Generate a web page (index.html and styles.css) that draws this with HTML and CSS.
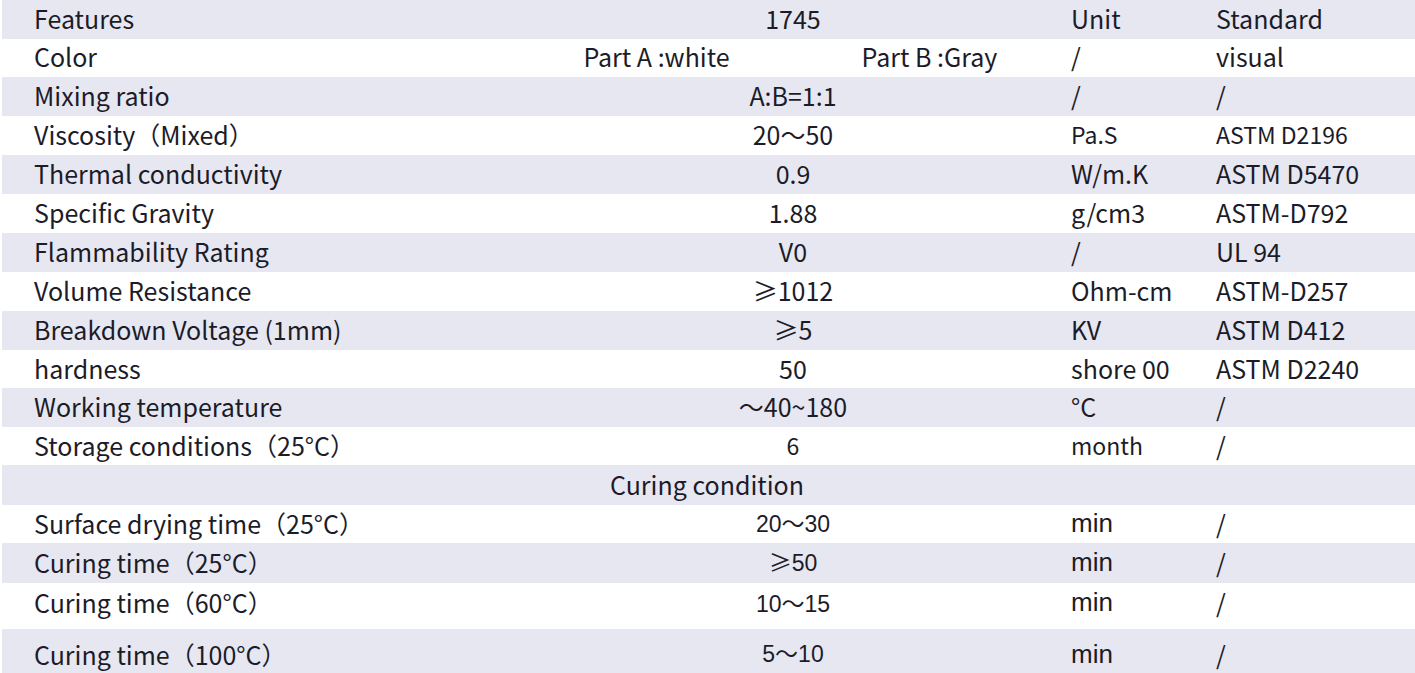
FILE: index.html
```html
<!DOCTYPE html>
<html lang="en">
<head>
<meta charset="utf-8">
<title>1745 Specification</title>
<link rel="stylesheet" href="styles.css">
</head>
<body>
<div class="sheet">
  <div class="row shade h39">
    <div class="label">Features</div>
    <div class="val">1745</div>
    <div class="unit">Unit</div>
    <div class="std">Standard</div>
  </div>
  <div class="row h38">
    <div class="label up">Color</div>
    <div class="val split up"><span>Part A :white</span><span>Part B :Gray</span></div>
    <div class="unit up">/</div>
    <div class="std up">visual</div>
  </div>
  <div class="row shade h39">
    <div class="label">Mixing ratio</div>
    <div class="val">A:B=1:1</div>
    <div class="unit">/</div>
    <div class="std">/</div>
  </div>
  <div class="row h39">
    <div class="label">Viscosity（Mixed）</div>
    <div class="val">20～50</div>
    <div class="unit small">Pa.S</div>
    <div class="std small">ASTM D2196</div>
  </div>
  <div class="row shade h39">
    <div class="label">Thermal conductivity</div>
    <div class="val">0.9</div>
    <div class="unit">W/m.K</div>
    <div class="std">ASTM D5470</div>
  </div>
  <div class="row h39">
    <div class="label">Specific Gravity</div>
    <div class="val">1.88</div>
    <div class="unit">g/cm3</div>
    <div class="std">ASTM-D792</div>
  </div>
  <div class="row shade h39">
    <div class="label">Flammability Rating</div>
    <div class="val">V0</div>
    <div class="unit">/</div>
    <div class="std">UL 94</div>
  </div>
  <div class="row h39">
    <div class="label">Volume Resistance</div>
    <div class="val">≥1012</div>
    <div class="unit">Ohm-cm</div>
    <div class="std">ASTM-D257</div>
  </div>
  <div class="row shade h39">
    <div class="label">Breakdown Voltage (1mm)</div>
    <div class="val">≥5</div>
    <div class="unit">KV</div>
    <div class="std">ASTM D412</div>
  </div>
  <div class="row h38">
    <div class="label">hardness</div>
    <div class="val">50</div>
    <div class="unit">shore 00</div>
    <div class="std">ASTM D2240</div>
  </div>
  <div class="row shade h39">
    <div class="label">Working temperature</div>
    <div class="val">～40~180</div>
    <div class="unit">°C</div>
    <div class="std">/</div>
  </div>
  <div class="row h38">
    <div class="label">Storage conditions（25°C）</div>
    <div class="val small">6</div>
    <div class="unit small">month</div>
    <div class="std">/</div>
  </div>
  <div class="row shade h40">
    <div class="label"></div>
    <div class="val section">Curing condition</div>
    <div class="unit"></div>
    <div class="std"></div>
  </div>
  <div class="row h38">
    <div class="label">Surface drying time（25°C）</div>
    <div class="val arial">20<span class="cjk">～</span>30</div>
    <div class="unit arial-unit">min</div>
    <div class="std">/</div>
  </div>
  <div class="row shade h40">
    <div class="label">Curing time（25°C）</div>
    <div class="val arial"><span class="cjk">≥</span>50</div>
    <div class="unit arial-unit">min</div>
    <div class="std">/</div>
  </div>
  <div class="row h46 top">
    <div class="label">Curing time（60°C）</div>
    <div class="val arial">10<span class="cjk">～</span>15</div>
    <div class="unit arial-unit">min</div>
    <div class="std">/</div>
  </div>
  <div class="row shade h44 low">
    <div class="label">Curing time（100°C）</div>
    <div class="val arial">5<span class="cjk">～</span>10</div>
    <div class="unit arial-unit">min</div>
    <div class="std">/</div>
  </div>
</div>
</body>
</html>
```

FILE: styles.css
```css
html, body {
  margin: 0;
  padding: 0;
  background: #ffffff;
}

body {
  font-family: "Noto Sans CJK SC", "Noto Sans", sans-serif;
  font-size: 25px;
  color: #1c1c28;
  width: 1415px;
  height: 673px;
  overflow: hidden;
}

.sheet {
  display: flex;
  flex-direction: column;
  padding-left: 2px;
}

.row {
  box-sizing: border-box;
  display: grid;
  grid-template-columns: 518px 546px 145px 1fr;
  align-items: center;
  line-height: 30px;
  padding-bottom: 3px;
}

.row.shade {
  background: #e7e7f2;
}

.h38 { height: 38px; }
.h39 { height: 39px; }
.h40 { height: 40px; }
.h44 { height: 44px; }
.h46 { height: 46px; }

.row.top { align-items: start; padding-top: 4px; padding-bottom: 0; }
.row.low { align-items: end; padding-bottom: 4px; }

.label {
  padding-left: 32px;
  white-space: nowrap;
}

.val {
  text-align: center;
  white-space: nowrap;
}

.unit, .std {
  padding-left: 5px;
  white-space: nowrap;
}

.up { position: relative; top: -1px; }

.split {
  display: grid;
  grid-template-columns: 1fr 1fr;
}

.small { font-size: 23px; }

.arial {
  font-family: "Liberation Sans", Arial, sans-serif;
  font-size: 23px;
}

.arial-unit {
  font-family: "Liberation Sans", Arial, sans-serif;
  font-size: 26px;
}

.cjk {
  font-family: "Noto Sans CJK SC", sans-serif;
}

.section {
  text-align: left;
  padding-left: 90px;
}
```
